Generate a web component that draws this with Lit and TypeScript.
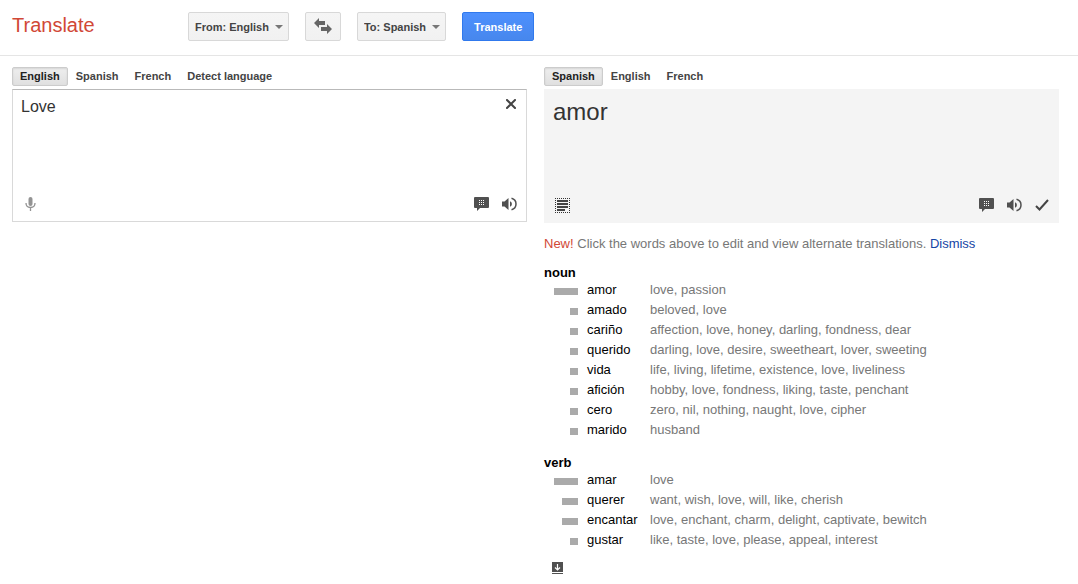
import { LitElement, html, css, svg } from "lit";
import { customElement, property, state } from "lit/decorators.js";
import { classMap } from "lit/directives/class-map.js";

interface Entry {
  word: string;
  meanings: string;
  weight: number;
}

interface Group {
  name: string;
  entries: Entry[];
}

const GROUPS: Group[] = [
  {
    name: "noun",
    entries: [
      { word: "amor", meanings: "love, passion", weight: 3 },
      { word: "amado", meanings: "beloved, love", weight: 1 },
      { word: "cariño", meanings: "affection, love, honey, darling, fondness, dear", weight: 1 },
      { word: "querido", meanings: "darling, love, desire, sweetheart, lover, sweeting", weight: 1 },
      { word: "vida", meanings: "life, living, lifetime, existence, love, liveliness", weight: 1 },
      { word: "afición", meanings: "hobby, love, fondness, liking, taste, penchant", weight: 1 },
      { word: "cero", meanings: "zero, nil, nothing, naught, love, cipher", weight: 1 },
      { word: "marido", meanings: "husband", weight: 1 },
    ],
  },
  {
    name: "verb",
    entries: [
      { word: "amar", meanings: "love", weight: 3 },
      { word: "querer", meanings: "want, wish, love, will, like, cherish", weight: 2 },
      { word: "encantar", meanings: "love, enchant, charm, delight, captivate, bewitch", weight: 2 },
      { word: "gustar", meanings: "like, taste, love, please, appeal, interest", weight: 1 },
    ],
  },
];

const dots = [5, 7, 9].map((x) =>
  [3, 5, 7].map((y) => svg`<rect x=${x} y=${y} width="1" height="1" fill="#fff" />`)
);

const keyboardIcon = html`<svg width="15" height="14" viewBox="0 0 15 14" aria-hidden="true">
  <path d="M1 0h13a1 1 0 0 1 1 1v9a1 1 0 0 1-1 1H6l-3 3v-3H1a1 1 0 0 1-1-1V1a1 1 0 0 1 1-1z" fill="#505050" />
  ${dots}
</svg>`;

const speakerIcon = html`<svg width="15" height="14" viewBox="0 0 15 14" aria-hidden="true">
  <path d="M0 4.500h2.500L6.500 1v12L2.500 9.500H0z" fill="#505050" />
  <path d="M8 4.200a3 3 0 0 1 0 5.600z" fill="#505050" />
  <path d="M9.500 1.300c6 1.500 6 9.900 0 11.400" fill="none" stroke="#505050" stroke-width="1.500" />
</svg>`;

const micIcon = html`<svg width="11" height="14" viewBox="0 0 11 14" aria-hidden="true">
  <rect x="3.500" y="0" width="4" height="9" rx="2" fill="#939393" />
  <path d="M1 6c0 6 9 6 9 0M5.500 10.500V14" fill="none" stroke="#939393" stroke-width="1.300" />
</svg>`;

const closeIcon = html`<svg width="10" height="10" viewBox="0 0 10 10" aria-hidden="true">
  <path d="M1 1l8 8M9 1L1 9" stroke="#444" stroke-width="2" stroke-linecap="square" />
</svg>`;

const checkIcon = html`<svg width="14" height="12" viewBox="0 0 14 12" aria-hidden="true">
  <path d="M1 7l3.500 3.500L13 1" fill="none" stroke="#444" stroke-width="2" />
</svg>`;

const textIcon = html`<svg width="15" height="15" viewBox="0 0 15 15" aria-hidden="true">
  <path
    d="M0 .5h15M0 14.500h15M.5 0v15M14.500 0v15"
    stroke="#333"
    stroke-dasharray="1 1"
    shape-rendering="crispEdges"
  />
  <path d="M2 3h11M2 6h11M2 9h11M2 12h8" stroke="#444" stroke-width="2" />
</svg>`;

const swapIcon = html`<svg width="18" height="16" viewBox="0 0 18 16" aria-hidden="true">
  <path d="M0 5l5-5v3h6v4H5v3zM18 11l-5-5v3H7v4h6v3z" fill="#666" />
</svg>`;

const expandIcon = html`<svg width="11" height="12" viewBox="0 0 11 12" aria-hidden="true">
  <path d="M0 0h11v10H0zM0 11h11v1H0z" fill="#505050" />
  <path d="M5.500 2v6M3 5.500L5.500 8L8 5.500" fill="none" stroke="#fff" stroke-width="1.200" />
</svg>`;

@customElement("language-select")
export class LanguageSelect extends LitElement {
  @property() prefix = "";
  @property({ attribute: false }) languages: string[] = [];

  static styles = css`
    :host {
      display: block;
    }
    .wrap {
      display: grid;
      align-items: center;
    }
    .select,
    .arrow {
      grid-area: 1 / 1;
    }
    .select {
      appearance: none;
      field-sizing: content;
      box-sizing: border-box;
      height: 29px;
      margin: 0;
      padding: 0 19px 0 6px;
      border: 1px solid #d8d8d8;
      border-radius: 2px;
      background: linear-gradient(#f5f5f5, #f1f1f1);
      color: #444;
      font: bold 11px "Liberation Sans", Arial, sans-serif;
    }
    .arrow {
      justify-self: end;
      margin-right: 6px;
      pointer-events: none;
    }
  `;

  render() {
    return html`<div class="wrap">
      <select class="select" aria-label=${`${this.prefix} language`}>
        ${this.languages.map((l) => html`<option>${this.prefix}: ${l}</option>`)}
      </select>
      <svg class="arrow" width="8" height="4" viewBox="0 0 8 4" aria-hidden="true">
        <path d="M0 0h8L4 4z" fill="#777" />
      </svg>
    </div>`;
  }
}

@customElement("language-tabs")
export class LanguageTabs extends LitElement {
  @property({ attribute: false }) languages: string[] = [];
  @state() private selected = 0;

  static styles = css`
    :host {
      display: flex;
    }
    .tab {
      box-sizing: border-box;
      height: 19px;
      margin: 0;
      padding: 0 7px 1px;
      border: 1px solid transparent;
      border-radius: 2px;
      background: none;
      color: #444;
      font: bold 11px "Liberation Sans", Arial, sans-serif;
    }
    .selected {
      border-color: #ccc;
      background: linear-gradient(#eee, #e0e0e0);
      box-shadow: inset 0 1px 2px rgba(0, 0, 0, 0.1);
      color: #222;
    }
  `;

  render() {
    return this.languages.map(
      (l, i) => html`<button
        class=${classMap({ tab: true, selected: i === this.selected })}
        aria-pressed=${i === this.selected}
        @click=${() => (this.selected = i)}
      >
        ${l}
      </button>`
    );
  }
}

@customElement("app-root")
export class AppRoot extends LitElement {
  static styles = css`
    :host {
      display: block;
      background: #fff;
      color: #000;
      font: 13px/20px "Liberation Sans", Arial, sans-serif;
    }
    .header {
      display: flex;
      align-items: center;
      gap: 16px;
      padding: 12px 12px 14px;
      border-bottom: 1px solid #e5e5e5;
    }
    .title {
      width: 160px;
      margin: 0;
      padding-bottom: 3px;
      color: #d14836;
      font-size: 20px;
      line-height: 26px;
      font-weight: normal;
    }
    .button {
      box-sizing: border-box;
      height: 29px;
      margin: 0;
      border: 1px solid #d8d8d8;
      border-radius: 2px;
      background: linear-gradient(#f5f5f5, #f1f1f1);
      font: bold 11px "Liberation Sans", Arial, sans-serif;
    }
    .swap {
      display: flex;
      align-items: center;
      justify-content: center;
      width: 36px;
      padding: 0 0 2px;
    }
    .primary {
      padding: 0 11px;
      border-color: #3079ed;
      background: linear-gradient(#4d90fe, #4787ed);
      color: #fff;
    }
    .columns {
      display: grid;
      grid-template-columns: 1fr 1fr;
      gap: 17px;
      padding: 11px 19px 8px 12px;
    }
    .panel {
      display: flex;
      flex-direction: column;
      box-sizing: border-box;
      height: 133px;
      margin-top: 3px;
      padding: 7px 9px 9px 8px;
      border: 1px solid #d9d9d9;
      border-top-color: #b9b9b9;
    }
    .result {
      height: 134px;
      padding: 7px 10px 10px 11px;
      border: 0;
      background: #f4f4f4;
    }
    .row {
      display: flex;
      flex: 1;
      align-items: flex-start;
    }
    .source {
      flex: 1;
      align-self: stretch;
      min-width: 0;
      margin: 0;
      padding: 0;
      border: 0;
      outline: 0;
      resize: none;
      background: none;
      color: #333;
      font: 16px/20px "Liberation Sans", Arial, sans-serif;
    }
    .output {
      margin-left: -2px;
      color: #333;
      font-size: 24px;
      line-height: 32px;
    }
    .icon {
      display: flex;
      padding: 0;
      border: 0;
      background: none;
    }
    .clear {
      padding: 2px 5px;
      margin-right: -4px;
    }
    .tools {
      display: flex;
      align-items: center;
      gap: 13px;
      height: 16px;
    }
    .mic {
      padding-left: 4px;
    }
    .spacer {
      flex: 1;
    }
    .hint {
      margin: 11px 0 8px;
      color: #777;
    }
    .new {
      color: #d14836;
    }
    .link {
      color: #1545a5;
      text-decoration: none;
    }
    .group {
      width: 100%;
      margin-bottom: 12px;
      border-collapse: collapse;
      table-layout: fixed;
    }
    .group caption {
      padding-top: 4px;
      text-align: left;
      font-weight: bold;
      line-height: 14px;
    }
    .group th,
    .group td {
      height: 20px;
      padding: 0;
      text-align: left;
      font-weight: normal;
    }
    .group .bar-cell {
      width: 34px;
      padding-right: 9px;
    }
    .bar {
      height: 7px;
      margin: 2px 0 0 auto;
      background: #aaa;
    }
    .group .word {
      width: 63px;
    }
    .group .meanings {
      color: #777;
    }
    .expand {
      margin-left: 8px;
    }
  `;

  render() {
    return html`
      <header class="header">
        <h1 class="title">Translate</h1>
        <language-select prefix="From" .languages=${["English", "Spanish", "French"]}></language-select>
        <button class="button swap" aria-label="Swap languages">${swapIcon}</button>
        <language-select prefix="To" .languages=${["Spanish", "English", "French"]}></language-select>
        <button class="button primary">Translate</button>
      </header>
      <main class="columns">
        <section>
          <language-tabs .languages=${["English", "Spanish", "French", "Detect language"]}></language-tabs>
          <div class="panel">
            <div class="row">
              <textarea class="source" aria-label="Source text" spellcheck="false" .value=${"Love"}></textarea>
              <button class="icon clear" aria-label="Clear text">${closeIcon}</button>
            </div>
            <div class="tools">
              <button class="icon mic" aria-label="Speak">${micIcon}</button>
              <span class="spacer"></span>
              <button class="icon" aria-label="Input tools">${keyboardIcon}</button>
              <button class="icon" aria-label="Listen">${speakerIcon}</button>
            </div>
          </div>
        </section>
        <section>
          <language-tabs .languages=${["Spanish", "English", "French"]}></language-tabs>
          <div class="panel result">
            <div class="row"><span class="output" lang="es">amor</span></div>
            <div class="tools">
              <button class="icon" aria-label="Select text">${textIcon}</button>
              <span class="spacer"></span>
              <button class="icon" aria-label="Input tools">${keyboardIcon}</button>
              <button class="icon" aria-label="Listen">${speakerIcon}</button>
              <button class="icon" aria-label="Rate translation">${checkIcon}</button>
            </div>
          </div>
          <p class="hint">
            <span class="new">New!</span> Click the words above to edit and view alternate translations.
            <a class="link" href="#">Dismiss</a>
          </p>
          ${GROUPS.map(
            (g) => html`<table class="group">
              <caption>${g.name}</caption>
              <tbody>
                ${g.entries.map(
                  (e) => html`<tr>
                    <td class="bar-cell"><div class="bar" style="width:${e.weight * 8}px"></div></td>
                    <th class="word" scope="row" lang="es">${e.word}</th>
                    <td class="meanings">${e.meanings}</td>
                  </tr>`
                )}
              </tbody>
            </table>`
          )}
          <button class="icon expand" aria-label="Show more">${expandIcon}</button>
        </section>
      </main>
    `;
  }
}
